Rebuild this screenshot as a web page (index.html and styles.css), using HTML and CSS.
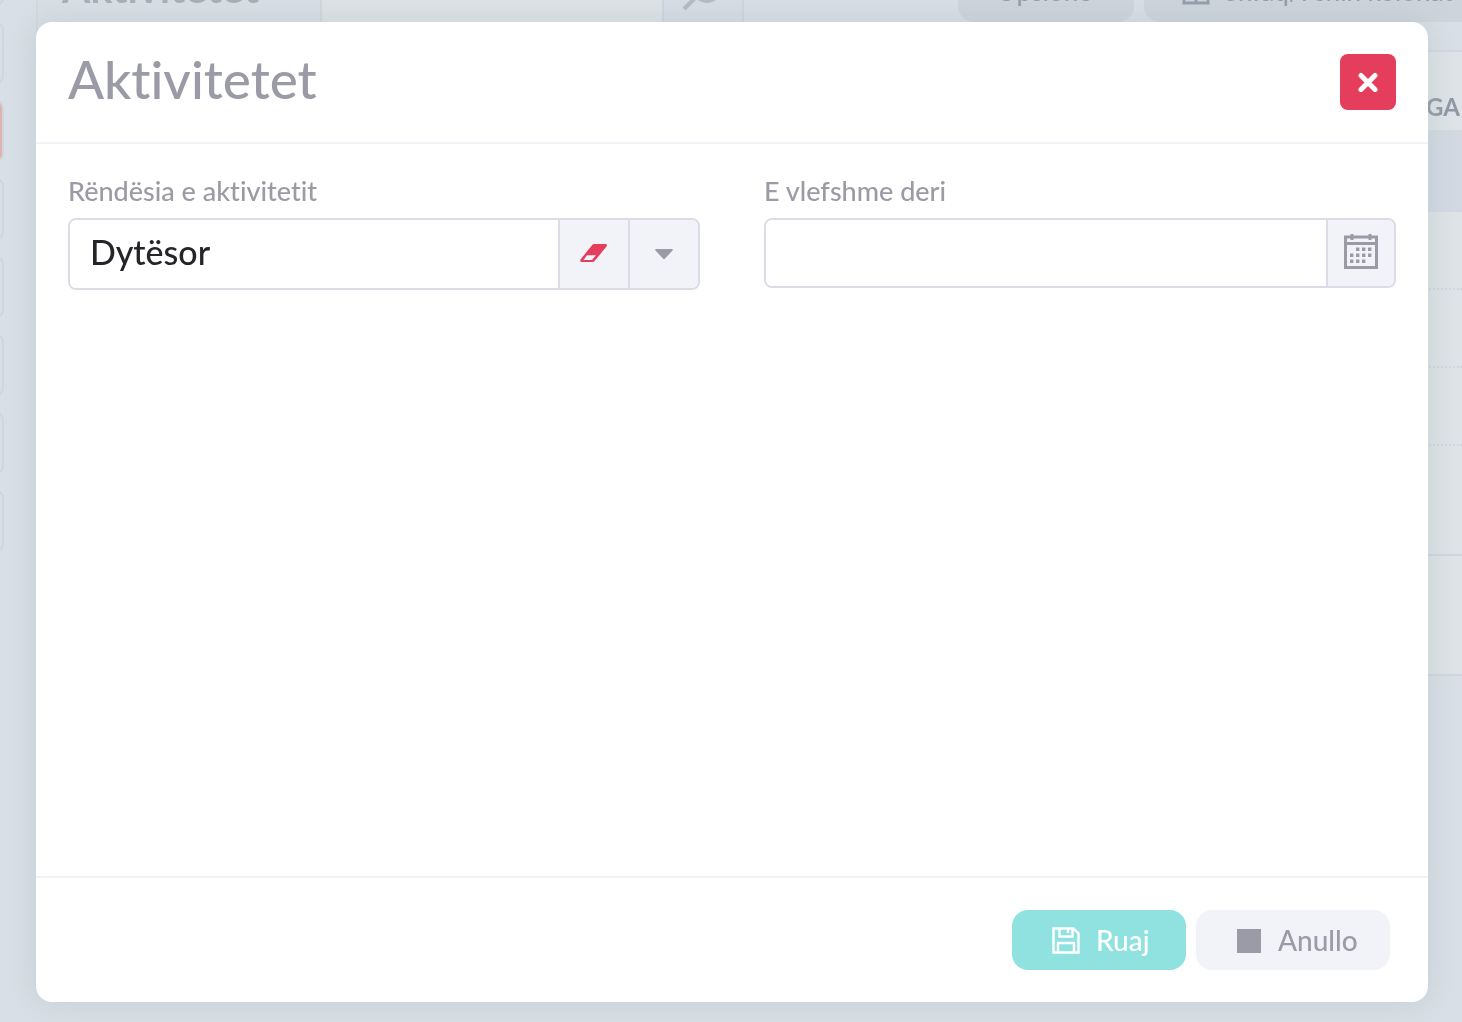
FILE: index.html
```html
<!DOCTYPE html>
<html lang="sq">
<head>
<meta charset="utf-8">
<meta name="viewport" content="width=device-width, initial-scale=1">
<title>Aktivitetet</title>
<link rel="stylesheet" href="styles.css">
</head>
<body>
<div class="page" inert>
  <nav class="sidebar">
    <a href="#" class="nav-item"></a>
    <a href="#" class="nav-item"></a>
    <a href="#" class="nav-item nav-item-active"></a>
    <a href="#" class="nav-item"></a>
    <a href="#" class="nav-item"></a>
    <a href="#" class="nav-item"></a>
    <a href="#" class="nav-item"></a>
    <a href="#" class="nav-item"></a>
  </nav>
  <main class="content">
    <div class="toolbar">
      <h1 class="page-title">Aktivitetet</h1>
      <div class="search">
        <input class="search-input" type="text" aria-label="Kërko">
        <button class="search-button" type="button" aria-label="Kërko">
          <svg width="40" height="40" viewBox="0 0 40 40" fill="none" stroke="currentColor" stroke-width="4"><circle cx="25" cy="15" r="13"/><path d="M15 23 2 36"/></svg>
        </button>
      </div>
      <div class="toolbar-actions">
        <button class="tool-button tool-options" type="button">Opsione</button>
        <button class="tool-button tool-columns" type="button">
          <svg width="28" height="28" viewBox="0 0 28 28" fill="none" stroke="currentColor" stroke-width="3"><path d="M2 2h24v24H2zM14 2v24M2 14h24"/></svg>
          Shfaq/Fshih kolonat
        </button>
      </div>
    </div>
    <table class="grid">
      <thead><tr><th>NGA</th></tr></thead>
      <tbody>
        <tr class="selected"><td></td></tr>
        <tr><td></td></tr>
        <tr><td></td></tr>
        <tr><td></td></tr>
        <tr class="last"><td></td></tr>
      </tbody>
      <tfoot><tr><td></td></tr></tfoot>
    </table>
  </main>
</div>

<div class="overlay">
  <form class="modal" role="dialog" aria-modal="true" aria-labelledby="modal-title">
    <header class="modal-header">
      <h2 class="modal-title" id="modal-title">Aktivitetet</h2>
      <button class="close" type="button" aria-label="Mbyll">
        <svg width="20" height="20" viewBox="0 0 20 20" fill="none" stroke="currentColor" stroke-width="5" stroke-linecap="round"><path d="m3 3.500 14 14M17 3.500l-14 14"/></svg>
      </button>
    </header>
    <div class="modal-body">
      <div class="field">
        <label class="label" for="importance">Rëndësia e aktivitetit</label>
        <div class="control">
          <input class="input" id="importance" type="text" value="Dytësor">
          <button class="addon addon-clear" type="button" aria-label="Pastro">
            <svg width="28" height="20" viewBox="0 0 28 20"><path fill="currentColor" fill-rule="evenodd" d="M14 0h11q3 0 1.500 2.500L15 16.500Q14 18 12 18H2q-2.500 0-1.500-2.500L12 1.200Q13 0 14 0zM7 11.200 3.500 16h8.500l4-4.800z"/></svg>
          </button>
          <button class="addon addon-open" type="button" aria-label="Hap listën">
            <svg width="18" height="10" viewBox="0 0 18 10"><path fill="currentColor" d="M1 0h16q1.500 0 .5 1.500L10 9.500q-1 1-2 0L.5 1.500Q-.5 0 1 0z"/></svg>
          </button>
        </div>
      </div>
      <div class="field">
        <label class="label" for="valid-until">E vlefshme deri</label>
        <div class="control control-date">
          <input class="input" id="valid-until" type="text">
          <button class="addon" type="button" aria-label="Zgjidh datën">
            <svg width="34" height="38" viewBox="0 0 34 38"><path fill="none" stroke="currentColor" stroke-width="3" d="M1.500 3h31v30.500h-31zM1.500 9.500h31M8 0v6M26 0v6"/><path fill="currentColor" d="M12 13.500h3.400v3.400H12zM18 13.500h3.400v3.400H18zM24 13.500h3.400v3.400H24zM6 19.500h3.400v3.400H6zM12 19.500h3.400v3.400H12zM18 19.500h3.400v3.400H18zM24 19.500h3.400v3.400H24zM6 25.500h3.400v3.400H6zM12 25.500h3.400v3.400H12zM18 25.500h3.400v3.400H18z"/></svg>
          </button>
        </div>
      </div>
    </div>
    <footer class="modal-footer">
      <button class="button button-save" type="submit">
        <svg width="28" height="28" viewBox="0 0 28 28" fill="none" stroke="currentColor" stroke-width="2.400"><path d="M1.500 2.500h20l5 5v19h-25zM7.500 2.500v8h13v-8M16 3v4M6 26V17h16v9"/></svg>
        Ruaj
      </button>
      <button class="button button-cancel" type="button">
        <svg width="26" height="26" viewBox="0 0 26 26"><path fill="currentColor" d="M1 2h24v24H1z"/></svg>
        Anullo
      </button>
    </footer>
  </form>
</div>
</body>
</html>
```

FILE: styles.css
```css
* { box-sizing: border-box; }

body {
  margin: 0;
  min-height: 100vh;
  overflow: hidden;
  background: #d8dfe6;
  color: #9a9ba6;
  font-family: "Lato Medium", Lato, "Open Sans", sans-serif;
  font-weight: 500;
  font-variant-ligatures: none;
}

button, input { font: inherit; color: inherit; margin: 0; }
button { padding: 0; border: 0; cursor: pointer; }
svg { display: block; flex: none; }

/* Page behind the dialog, scrolled under its top edge */
.page {
  position: fixed;
  inset: 0;
  display: flex;
  align-items: flex-start;
  margin-top: -56px;
}

.sidebar {
  display: flex;
  flex-direction: column;
  gap: 16px;
  width: 36px;
  flex: none;
}
.nav-item {
  width: 16px;
  height: 62px;
  margin-left: -12px;
  border: 2px solid #d0d6dd;
  border-radius: 12px;
}
.nav-item-active { background: #dfb1b2; }

.content {
  flex: 1;
  min-width: 0;
  padding-left: 24px;
  border-left: 2px solid #d2d9df;
}
.toolbar { display: flex; align-items: flex-start; height: 84px; }
.page-title {
  width: 258px;
  flex: none;
  margin: 0;
  padding-top: 20px;
  color: #a8afb6;
  font-family: Lato, "Open Sans", sans-serif;
  font-size: 41px;
  font-weight: 700;
  line-height: 48px;
}
.search { display: flex; width: 424px; height: 84px; flex: none; }
.search-input {
  flex: 1;
  min-width: 0;
  border: 2px solid #d0d7dd;
  border-right: 0;
  border-radius: 8px 0 0 8px;
  background: #dde3e6;
}
.search-button {
  width: 82px;
  padding: 14px 0 0 18px;
  border: 2px solid #ced5dc;
  border-radius: 0 8px 8px 0;
  background: #d6dde5;
  color: #b3bac2;
}
.toolbar-actions {
  display: flex;
  flex: 1;
  justify-content: flex-end;
  gap: 10px;
  min-width: 0;
}
.tool-button {
  display: flex;
  align-items: center;
  height: 78px;
  gap: 14px;
  flex: none;
  padding: 16px 38px 0;
  border-radius: 16px;
  background: #cdd4dc;
  color: #959dab;
  font-size: 26px;
  line-height: 28px;
  white-space: nowrap;
}
.tool-options { width: 176px; }
.tool-columns { width: 318px; border-radius: 16px 0 0 16px; }

.grid {
  width: 100%;
  margin-top: 22px;
  border-collapse: separate;
  border-spacing: 0;
  border-top: 2px solid #d0d8df;
  background: #dde3e6;
}
.grid th {
  height: 78px;
  padding: 32px 2px 0;
  color: #8f98a5;
  font-family: Lato, "Open Sans", sans-serif;
  font-size: 24px;
  font-weight: 700;
  line-height: 30px;
  text-align: right;
}
.grid td { height: 78px; padding: 0; border-bottom: 2px dotted #d0d6df; }
.grid .selected td { height: 82px; background: #d2d9e2; }
.grid .last td { height: 110px; border-bottom-style: solid; }
.grid tfoot td { height: 120px; border-bottom-style: solid; }

.overlay {
  position: relative;
  display: flex;
  min-height: 100vh;
  padding: 22px 34px 20px 36px;
}
.modal {
  display: flex;
  flex: 1;
  flex-direction: column;
  min-width: 0;
  border-radius: 16px;
  background: #fff;
  box-shadow: 0 0 28px rgba(160, 182, 182, 0.4);
}
.modal-header {
  display: flex;
  align-items: flex-start;
  justify-content: space-between;
  padding: 32px;
  border-bottom: 2px solid #f2f3f8;
}
.modal-title { margin: 0; font-size: 53px; font-weight: 500; line-height: 50px; }
.close {
  display: grid;
  place-items: center;
  width: 56px;
  height: 56px;
  border-radius: 8px;
  background: #e53d5c;
  color: #fff;
}

.modal-body {
  display: grid;
  flex: 1;
  grid-template-columns: 1fr 1fr;
  align-items: start;
  gap: 64px;
  padding: 32px;
}
.label { display: block; margin-bottom: 12px; font-size: 27px; line-height: 30px; }
.control {
  display: flex;
  height: 72px;
  overflow: hidden;
  border: 2px solid #dcdce8;
  border-radius: 8px;
}
.control-date { height: 70px; }
.input {
  flex: 1;
  min-width: 0;
  padding: 0 20px 6px;
  border: 0;
  outline: 0;
  background: #fff;
  color: #242529;
  font-size: 34px;
}
.addon {
  display: grid;
  place-items: center;
  width: 70px;
  border-left: 2px solid #dcdce8;
  background: #f2f3f8;
}
.control-date .addon { width: 68px; }
.addon-clear { color: #e53d5c; }

.modal-footer {
  display: flex;
  justify-content: flex-end;
  gap: 10px;
  padding: 32px 38px 32px 32px;
  border-top: 2px solid #f2f3f8;
}
.button {
  display: flex;
  align-items: center;
  gap: 16px;
  height: 60px;
  padding-left: 40px;
  border-radius: 16px;
  font-size: 28px;
}
.button-save { width: 174px; background: #90e2e0; color: #fff; }
.button-cancel { width: 194px; background: #f2f3f8; }
```
